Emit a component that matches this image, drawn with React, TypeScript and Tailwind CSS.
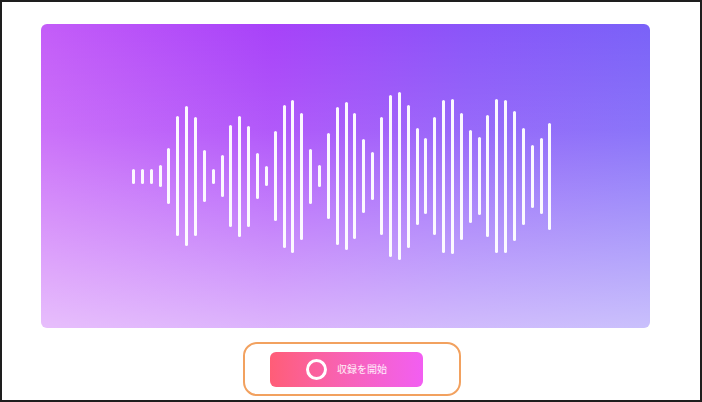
const bars = [
  15, 15, 15, 22, 56, 120, 140, 119, 52, 15,
  42, 102, 121, 101, 46, 20, 90, 143, 153, 127,
  55, 22, 86, 138, 148, 126, 74, 48, 118, 162,
  168, 143, 97, 76, 118, 153, 155, 127, 93, 78,
  122, 154, 153, 130, 97, 63, 76, 107,
];

function Waveform() {
  return (
    <div className="flex h-full items-center gap-[5.87px] pl-[91px]">
      {bars.map((height, i) => (
        <span key={i} className="block w-[3px] rounded-full bg-white/95" style={{ height }} />
      ))}
    </div>
  );
}

export default function App() {
  return (
    <div className="h-[402px] w-[702px] border-2 border-[#1e1e1e] bg-white font-['Noto_Sans_CJK_JP','Noto_Sans',sans-serif]">
      <div className="ml-[39px] mt-[22px] h-[304px] w-[609px] overflow-hidden rounded-md bg-[linear-gradient(to_bottom,rgba(255,255,255,0)_0%,rgba(255,255,255,0.12)_35%,rgba(255,255,255,0.6)_100%),linear-gradient(to_right,#c45df8_0%,#a742f9_38%,#8a55f9_70%,#7a62f8_100%)]">
        <Waveform />
      </div>

      <div className="ml-[241px] mt-[14px] flex h-[54px] w-[218px] items-center rounded-[14px] border-2 border-[#f2a15f]">
        <button
          type="button"
          className="ml-[25px] flex h-[35px] w-[153px] items-center gap-[10px] rounded-md bg-gradient-to-r from-[#ff5d77] to-[#f25ef2] pl-[36px]"
        >
          <span className="block h-[21px] w-[21px] rounded-full border-[3px] border-white" />
          <span className="text-[10px] leading-none text-white/90">収録を開始</span>
        </button>
      </div>
    </div>
  );
}
